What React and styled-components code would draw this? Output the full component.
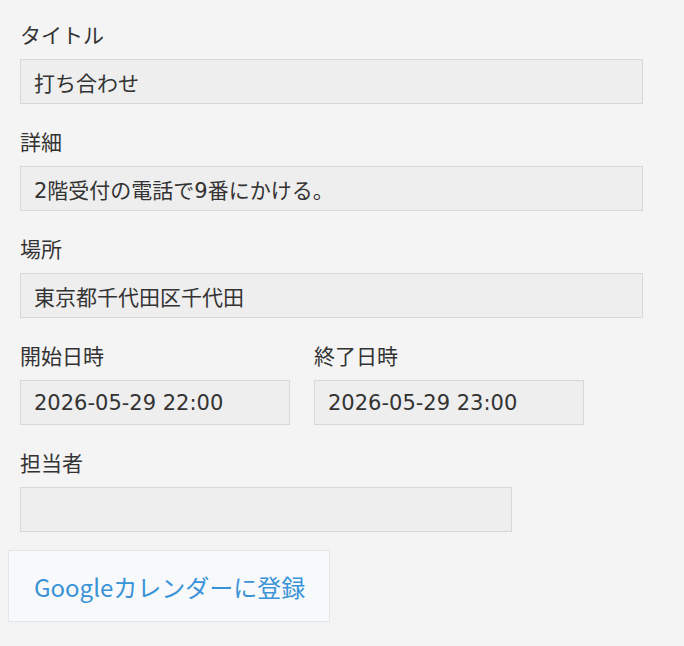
import styled, { createGlobalStyle } from "styled-components";

const GlobalStyle = createGlobalStyle`
  html, body {
    margin: 0;
    padding: 0;
    background-color: #f4f4f4;
  }
  body {
    font-family: "Noto Sans CJK JP", "Noto Sans", sans-serif;
    color: #333333;
  }
`;

const Page = styled.div`
  padding: 19px 8px 24px 8px;
`;

const Form = styled.div`
  padding: 0 12px;
  display: flex;
  flex-direction: column;
  gap: 22px;
`;

const Field = styled.div`
  display: flex;
  flex-direction: column;
  width: ${({ width }) => width || "623px"};
`;

const Row = styled.div`
  display: flex;
  gap: 24px;
`;

const Label = styled.label`
  font-size: 21px;
  line-height: 30px;
  color: #333333;
  margin-bottom: 10px;
`;

const Value = styled.div`
  box-sizing: border-box;
  height: 45px;
  padding: 0 13px;
  display: flex;
  align-items: center;
  background-color: #eeeeee;
  border: 1px solid #d8d8d8;
  font-family: "DejaVu Sans", "Noto Sans CJK JP", sans-serif;
  font-size: 21px;
  color: #333333;
  white-space: nowrap;
`;

const CalendarButton = styled.button`
  box-sizing: border-box;
  margin-top: 18px;
  width: 322px;
  height: 72px;
  padding: 0 0 0 25px;
  background-color: #f8f9fb;
  border: 1px solid #e3e5e8;
  color: #3a93d6;
  font-family: "Noto Sans CJK JP", "Noto Sans", sans-serif;
  font-size: 24px;
  text-align: left;
  white-space: nowrap;
  cursor: pointer;
`;

export default function App() {
  return (
    <>
      <GlobalStyle />
      <Page>
        <Form>
          <Field>
            <Label>タイトル</Label>
            <Value>打ち合わせ</Value>
          </Field>
          <Field>
            <Label>詳細</Label>
            <Value>2階受付の電話で9番にかける。</Value>
          </Field>
          <Field>
            <Label>場所</Label>
            <Value>東京都千代田区千代田</Value>
          </Field>
          <Row>
            <Field width="270px">
              <Label>開始日時</Label>
              <Value>2026-05-29 22:00</Value>
            </Field>
            <Field width="270px">
              <Label>終了日時</Label>
              <Value>2026-05-29 23:00</Value>
            </Field>
          </Row>
          <Field width="492px">
            <Label>担当者</Label>
            <Value />
          </Field>
        </Form>
        <CalendarButton>Googleカレンダーに登録</CalendarButton>
      </Page>
    </>
  );
}
